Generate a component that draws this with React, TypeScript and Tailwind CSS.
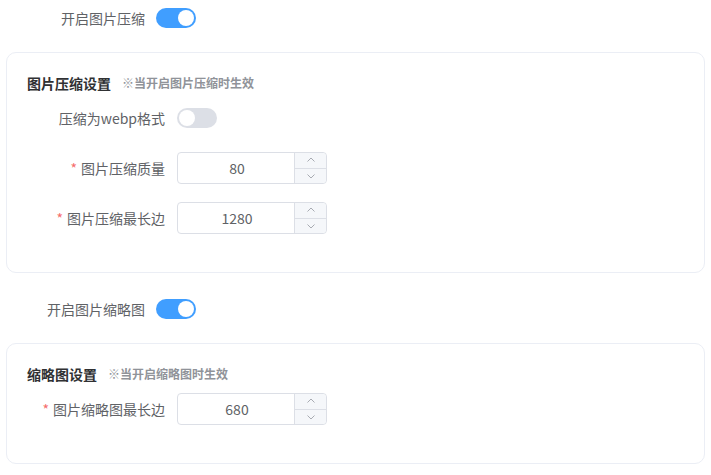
import { useState } from "react";

function Switch({ on }: { on: boolean }) {
  const [checked, setChecked] = useState(on);
  return (
    <button
      onClick={() => setChecked(!checked)}
      className={`relative h-5 w-10 rounded-full transition-colors ${
        checked ? "bg-[#409eff]" : "bg-[#dcdfe6]"
      }`}
    >
      <span
        className={`absolute top-[2px] h-4 w-4 rounded-full bg-white transition-all ${
          checked ? "left-[22px]" : "left-[2px]"
        }`}
      />
    </button>
  );
}

function Arrow({ up }: { up?: boolean }) {
  return (
    <svg width="10" height="10" viewBox="0 0 10 10" fill="none">
      <path
        d={up ? "M1.5 6.5 L5 3 L8.5 6.5" : "M1.5 3.5 L5 7 L8.5 3.5"}
        stroke="#a8abb2"
        strokeWidth="1"
      />
    </svg>
  );
}

function InputNumber({ value }: { value: number }) {
  return (
    <div className="flex h-8 w-[150px] rounded-[4px] border border-[#dcdfe6] bg-white">
      <div className="flex flex-1 items-center justify-center pl-[2px] text-sm text-[#606266]">
        {value}
      </div>
      <div className="flex w-[32px] flex-col border-l border-[#dcdfe6] bg-[#f5f7fa] rounded-r-[4px]">
        <div className="flex flex-1 items-center justify-center border-b border-[#dcdfe6]">
          <Arrow up />
        </div>
        <div className="flex flex-1 items-center justify-center">
          <Arrow />
        </div>
      </div>
    </div>
  );
}

function FormRow({
  label,
  required,
  children,
}: {
  label: string;
  required?: boolean;
  children: React.ReactNode;
}) {
  return (
    <div className="flex h-8 items-center">
      <div className="w-[150px] pr-3 text-right text-sm text-[#606266]">
        {required && <span className="mr-1 text-[#f56c6c]">*</span>}
        {label}
      </div>
      {children}
    </div>
  );
}

function ToggleRow({ label }: { label: string }) {
  return (
    <div className="flex h-8 items-center">
      <div className="w-[156px] pr-[11px] text-right text-sm text-[#606266]">{label}</div>
      <Switch on />
    </div>
  );
}

export default function App() {
  return (
    <div
      className="h-[475px] w-[711px] bg-white pt-[2px]"
      style={{ fontFamily: '"Noto Sans CJK SC", "Noto Sans", sans-serif' }}
    >
      <ToggleRow label="开启图片压缩" />

      {/* 图片压缩设置 */}
      <div className="mx-[6px] mt-[18px] h-[221px] rounded-[10px] border border-[#ebeef5] px-5 pt-5">
        <div className="flex h-5 items-center">
          <span className="text-sm font-bold text-[#303133]">图片压缩设置</span>
          <span className="ml-[11px] text-xs font-bold text-[#909399]">※当开启图片压缩时生效</span>
        </div>
        <div className="mt-[9px] flex flex-col gap-[18px]">
          <FormRow label="压缩为webp格式">
            <Switch on={false} />
          </FormRow>
          <FormRow label="图片压缩质量" required>
            <InputNumber value={80} />
          </FormRow>
          <FormRow label="图片压缩最长边" required>
            <InputNumber value={1280} />
          </FormRow>
        </div>
      </div>

      <div className="mt-[20px]">
        <ToggleRow label="开启图片缩略图" />
      </div>

      {/* 缩略图设置 */}
      <div className="mx-[6px] mt-[18px] h-[121px] rounded-[10px] border border-[#ebeef5] px-5 pt-5">
        <div className="flex h-5 items-center">
          <span className="text-sm font-bold text-[#303133]">缩略图设置</span>
          <span className="ml-[11px] text-xs font-bold text-[#909399]">※当开启缩略图时生效</span>
        </div>
        <div className="mt-[9px]">
          <FormRow label="图片缩略图最长边" required>
            <InputNumber value={680} />
          </FormRow>
        </div>
      </div>
    </div>
  );
}
